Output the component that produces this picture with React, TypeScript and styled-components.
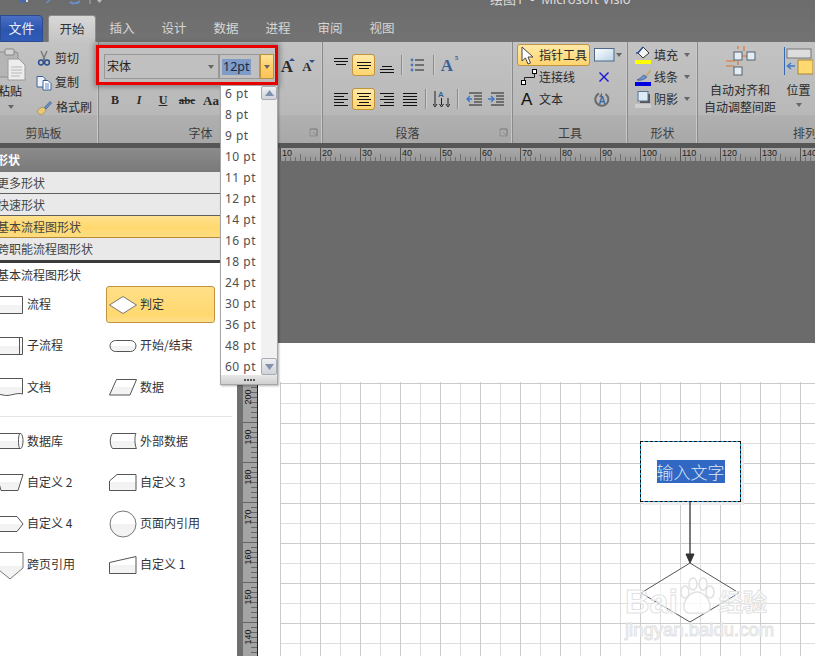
import React, { useId } from 'react';
import styled, { createGlobalStyle } from 'styled-components';

const CJK = '"Noto Sans CJK SC", "Liberation Sans", sans-serif';

const Global = createGlobalStyle`
  html, body { margin: 0; padding: 0; background: #fff; }
  body { font-family: ${CJK}; }
  * { box-sizing: border-box; }
`;

const Screen = styled.div`
  position: relative; width: 815px; height: 656px; overflow: hidden;
  display: flex; flex-direction: column; color: #333; font-size: 12px; background: #fff;
`;
const Lbl = styled.span`display: block; margin-bottom: 2px; white-space: nowrap;`;

/* ---------- title + tabs ---------- */
const TitleBar = styled.header`
  height: 42px; flex: none; background: linear-gradient(#6c6c6c, #737373);
  display: flex; flex-direction: column; justify-content: space-between; overflow: hidden;
`;
const TitleText = styled.div`
  height: 14px; margin-top: -9px; padding-left: 490px; color: #dcdcdc; font-size: 13px;
  line-height: 16px; white-space: pre; font-family: "Noto Sans", ${CJK};
`;
const QuickIcons = styled.svg`
  position: absolute; left: 0; top: 0; display: block;
`;
const TabRow = styled.nav`display: flex; height: 27px; align-items: flex-end;`;
const FileTab = styled.div`
  width: 43px; height: 27px; margin-right: 5px; border-radius: 0 4px 0 0;
  background: linear-gradient(#4a6fc2, #2b56b0 55%, #2f5cb8);
  border: 1px solid #2a4a92; color: #e8eefc; font-size: 13px;
  display: flex; align-items: center; justify-content: center; padding-bottom: 3px;
`;
const Tab = styled.div<{ $active?: boolean }>`
  width: ${p => (p.$active ? 48 : 52)}px; height: 27px; border-radius: 3px 3px 0 0;
  display: flex; align-items: center; justify-content: center; font-size: 12.5px; padding-bottom: 2px;
  color: ${p => (p.$active ? '#333' : '#d6d6d6')};
  background: ${p => (p.$active ? 'linear-gradient(#d8d8d8, #c4c4c4)' : 'none')};
  border: ${p => (p.$active ? '1px solid #8c8c8c' : '0')}; border-bottom: 0;
`;

/* ---------- ribbon ---------- */
const Ribbon = styled.section`
  height: 101px; flex: none; display: flex; overflow: hidden;
  background: linear-gradient(#c3c3c3, #b8b8b8 72%, #b0b0b0 73%, #a8a8a8);
`;
const Group = styled.div<{ $w: number }>`
  width: ${p => p.$w}px; flex: none; display: flex; flex-direction: column; position: relative;
  border-right: 1px solid #8a8a8a; box-shadow: inset -1px 0 #c8c8c8;
  &:last-child { border-right: 0; box-shadow: none; }
`;
const GroupBody = styled.div<{ $pl?: number; $pt?: number }>`
  height: 82px; padding-left: ${p => p.$pl ?? 0}px; padding-top: ${p => p.$pt ?? 0}px; display: flex;
`;
const GroupLabel = styled.div<{ $pr?: number }>`
  height: 19px; display: flex; align-items: center; justify-content: center; color: #3c3c3c; font-size: 12px;
  padding-right: ${p => p.$pr ?? 0}px; padding-bottom: 2px;
`;
const Launcher = styled.svg`position: absolute; right: 3px; bottom: 5px;`;
const Col = styled.div<{ $gap?: number; $pt?: number }>`
  display: flex; flex-direction: column; gap: ${p => p.$gap ?? 0}px; padding-top: ${p => p.$pt ?? 0}px;
`;
const Row = styled.div<{ $ml?: number }>`display: flex; align-items: center; margin-left: ${p => p.$ml ?? 0}px;`;
const Caret = styled.i`
  display: block; width: 0; height: 0; border: 3.5px solid transparent; border-top: 4px solid #666; border-bottom: 0;
`;

const PasteCol = styled.div`width: 36px; flex: none; display: flex; flex-direction: column; align-items: flex-start;`;
const PasteSvg = styled.svg`display: block; margin-top: 6px;`;
const PasteLabel = styled.div`margin: 1px 0 0 -2px; height: 18px; line-height: 18px; color: #222; white-space: nowrap;`;
const PasteCaret = styled(Caret)`margin: 5px 0 0 8px;`;
const ClipRow = styled.div`height: 24.5px; display: flex; align-items: center; gap: 3px; color: #2c2c2c;`;

const Combo = styled.div<{ $w: number }>`
  width: ${p => p.$w}px; height: 25px; background: #c0c0c0; border: 1px solid #989898;
  display: flex; align-items: center; padding: 0 4px 0 2px; justify-content: space-between; color: #222;
`;
const SizeSel = styled.span`
  background: #7f9bc8; color: #1a2a44; font: 12.5px/16px "Noto Sans", sans-serif; padding: 0 1px;
`;
const ComboArrow = styled.div`
  width: 14px; height: 25px; border: 1px solid #c0913d; background: linear-gradient(#ffe39b, #ffcf66 50%, #f9c45a);
  display: flex; align-items: center; justify-content: center; margin-right: 3px;
`;
const FontBtn = styled.div<{ $s?: number; $w?: number; $deco?: string; $italic?: boolean }>`
  width: ${p => p.$w ?? 24}px; height: 24px; display: flex; align-items: center; justify-content: center;
  font: ${p => (p.$italic ? 'italic ' : '')}700 ${p => p.$s ?? 12}px/1 "Liberation Serif", serif; color: #2a2a2a; position: relative;
  text-decoration: ${p => p.$deco ?? 'none'};
`;
const Sup = styled.i`position: absolute; top: 3px; right: 2px; width: 0; height: 0;
  border: 3px solid transparent; border-bottom: 3px solid #30508c; border-top: 0;`;
const Sub = styled.i`position: absolute; top: 5px; right: 2px; width: 0; height: 0;
  border: 3px solid transparent; border-top: 3px solid #30508c; border-bottom: 0;`;

const IconBtn = styled.div<{ $active?: boolean; $w?: number; $ml?: number }>`
  width: ${p => p.$w ?? 23}px; height: 22px; display: flex; align-items: center; justify-content: center;
  border-radius: 3px; border: ${p => (p.$active ? '1px solid #c1923f' : '0')}; margin-left: ${p => p.$ml ?? 0}px;
  background: ${p => (p.$active ? 'linear-gradient(#ffe9a8, #ffd56f)' : 'none')};
`;
const Sep = styled.i<{ $m: number }>`display: block; width: 1px; height: 20px; background: #8a8a8a;
  box-shadow: 1px 0 #cfcfcf; margin: 0 ${p => p.$m}px;`;
const ParaRow = styled.div`display: flex; align-items: center; height: 22px; margin-bottom: 12px;`;
const BlueA = styled.span`font: 700 17px/1 "Liberation Serif", serif; color: #3a6098; position: relative;`;
const Sup5 = styled.span`position: absolute; top: -2px; right: -5px; font-size: 7px; color: #3a6098;`;
const PlainA = styled.span`font: 400 17px/1 "Liberation Sans", sans-serif; color: #111;`;

const ToolGrid = styled.div`
  display: grid; grid-template-columns: 73px 32px; column-gap: 4px; grid-auto-rows: 22px; align-items: center;
`;
const ToolItem = styled.div<{ $active?: boolean }>`
  height: 22px; display: flex; align-items: center; padding-left: 3px; color: #2a2a2a; border-radius: 3px;
  border: 1px solid ${p => (p.$active ? '#c1923f' : 'transparent')};
  background: ${p => (p.$active ? 'linear-gradient(#ffe9a8, #ffd56f)' : 'none')};
`;
const ToolIconBox = styled.span`width: 18px; flex: none; display: flex; align-items: center;`;
const Side = styled.div`display: flex; align-items: center; gap: 1px; height: 22px;`;
const SideCenter = styled.div<{ $ml?: number }>`
  display: flex; align-items: center; justify-content: center; width: 16px; margin-left: ${p => p.$ml ?? 0}px; height: 22px;
`;
const ShapeRow = styled.div`display: flex; align-items: center; height: 22px; gap: 2px; color: #2a2a2a;`;
const ShapeCaret = styled(Caret)`margin-left: 4px;`;
const BigBtn = styled.div<{ $w: number }>`
  width: ${p => p.$w}px; flex: none; display: flex; flex-direction: column; align-items: center; color: #2a2a2a;
  line-height: 17px; white-space: nowrap;
`;
const BigIcon = styled.svg`display: block; margin-top: 4px; margin-bottom: 4px;`;
const ArrangeLabel = styled(GroupLabel)`justify-content: flex-end; margin-right: -2px;`;
const BigCaret = styled(Caret)`margin-top: 5px;`;

/* ---------- main area ---------- */
const Main = styled.main`
  flex: 1; min-height: 0; display: flex; border-top: 5px solid #565656; background: #6b6b6b;
`;
const Panel = styled.aside`width: 237px; flex: none; display: flex; flex-direction: column; background: #fff; overflow: hidden;`;
const PanelHead = styled.div`
  height: 24px; flex: none; background: linear-gradient(#8c8c8c, #797979); color: #fff; font-weight: 700;
  line-height: 23px; text-indent: -4px; white-space: nowrap;
`;
const Accordion = styled.div`border-bottom: 3px solid #3b3b3b; flex: none;`;
const AccRow = styled.div<{ $active?: boolean }>`
  height: 22px; line-height: 21px; text-indent: -3px; white-space: nowrap; color: #444;
  border-bottom: 1px solid ${p => (p.$active ? '#b98a35' : '#5f5f5f')};
  background: ${p => (p.$active ? 'linear-gradient(#ffe28f, #ffd86f 50%, #ffdc7e)' : '#e9e9e9')};
  &:last-child { border-bottom: 0; }
`;
const StencilTitle = styled.div`height: 23px; line-height: 23px; text-indent: -3px; color: #333; flex: none; white-space: nowrap;`;
const StencilGrid = styled.div`
  display: grid; grid-template-columns: 113px 109px; grid-auto-rows: 37px; row-gap: 4.3px; margin-left: -7px;
`;
const Stencil = styled.div<{ $active?: boolean }>`
  display: flex; align-items: center; gap: 3px; padding-left: 2px; color: #333; border-radius: 3px; white-space: nowrap;
  border: 1px solid ${p => (p.$active ? '#c1923f' : 'transparent')};
  background: ${p => (p.$active ? 'linear-gradient(#ffdf88, #ffd86f 80%, #ffe08c)' : 'none')};
`;
const Divider = styled.hr`border: 0; height: 1px; background: #e4e4e4; margin: 10px 5px 6px 0;`;

const Work = styled.div`flex: 1; min-width: 0; display: flex; flex-direction: column;`;
const HRuler = styled.div`height: 13px; flex: none; margin-left: 43px; overflow: hidden; background: linear-gradient(#a8a8a8, #999);`;
const Backdrop = styled.div`height: 182px; flex: none; background: #6b6b6b;`;
const Lower = styled.div`flex: 1; min-height: 0; display: grid; grid-template-columns: 21px 1fr; background: #fff;`;
const VRulerCol = styled.div`padding-top: 40px;`;
const VRuler = styled.div`
  height: 273px; border-left: 6px solid #6f6f6f; border-right: 1px solid #222; background: #a4a4a4; overflow: hidden;
`;
const Paper = styled.div`padding: 39px 0 0 22px; min-width: 0;`;
const Sheet = styled.div`
  position: relative; height: 274px; background-color: #fff;
  background-image:
    linear-gradient(to right, #cbcbcb 1px, transparent 1px),
    linear-gradient(to bottom, #cbcbcb 1px, transparent 1px),
    linear-gradient(to right, #dedede 1px, transparent 1px),
    linear-gradient(to bottom, #dedede 1px, transparent 1px);
  background-size: 40px 40px, 40px 40px, 20px 20px, 20px 20px;
  background-position: 0 0, 0 1px, 0 0, 0 1px;
`;
const TextBox = styled.div`
  position: absolute; left: 360px; top: 59px; width: 101px; height: 61px; background: #fff;
  border: 1px solid #18a4e8; box-shadow: 3px 3px 0 #ececec;
  display: flex; align-items: center; justify-content: center;
  &::after { content: ''; position: absolute; inset: -1px; border: 1px dashed #111; }
`;
const Selected = styled.span`
  background: #3068c4; color: #dfe7f5; font-size: 17px; line-height: 23px; width: 68px; display: block;
  white-space: nowrap; font-weight: 300; text-align: center;
`;
const Flow = styled.svg`position: absolute; left: 360px; top: 118px;`;
const Watermark = styled.div`
  position: absolute; left: 345px; top: 201px; width: 150px; pointer-events: none; color: rgba(255,255,255,.6);
  -webkit-text-stroke: 1px #e2e2e2; white-space: nowrap;
`;
const WmTop = styled.div`display: flex; align-items: center; font: 700 34px/36px "Liberation Sans", sans-serif; height: 36px;`;
const WmCjk = styled.span`font: 700 24px/36px ${CJK}; margin-left: 3px;`;
const WmBottom = styled.div`font: 400 18.5px/18px "Liberation Sans", sans-serif; margin-top: 2px;`;
const Paw = styled.svg`display: block; margin: -8px 0 0 0;`;

/* ---------- overlays ---------- */
const RedFrame = styled.div`
  position: absolute; left: 96px; top: 45px; width: 182px; height: 40px; border: 3px solid #e80000;
  box-shadow: 0 0 5px 2px rgba(60,60,60,.45); pointer-events: none;
`;
const Dropdown = styled.div`
  position: absolute; left: 220px; top: 85px; width: 58px; height: 300px; background: #fff;
  border: 1px solid #a6a6a6; box-shadow: 1px 1px 2px rgba(0,0,0,.3); display: flex; flex-direction: column; overflow: hidden;
`;
const DdBody = styled.div`flex: 1; display: flex; min-height: 0;`;
const DdList = styled.div`flex: 1; margin-top: -3px; padding-left: 4px; overflow: hidden;`;
const DdItem = styled.div`
  height: 21px; font: 12px/21px "Noto Sans", sans-serif; color: #4f4f4f; letter-spacing: .5px; white-space: nowrap;
`;
const DdBar = styled.div`width: 16px; flex: none; background: #f1f1f1; display: flex; flex-direction: column; justify-content: space-between;`;
const DdArrow = styled.div<{ $h: number }>`
  height: ${p => p.$h}px; background: linear-gradient(#eef0f3, #cfd2d8); border: 1px solid #a8acb4; border-radius: 2px;
  display: flex; align-items: center; justify-content: center;
`;
const Grip = styled.div`
  height: 9px; flex: none; background: linear-gradient(#e8e8e8, #cfcfcf); display: flex; align-items: center; justify-content: center; gap: 1px;
  & > i { width: 2px; height: 2px; background: #555; display: block; }
`;
const ShapeSvg = styled.svg`flex: none; display: block; overflow: visible;`;
const RulerSvg = styled.svg`display: block;`;

/* ---------- icons ---------- */
const Lines = ({ kind }: { kind: 'left' | 'center' | 'right' | 'just' | 'top' | 'mid' | 'bot' }) => {
  const rows: [number, number, number][] = {
    left: [[1, 15, 3], [1, 11, 6], [1, 15, 9], [1, 11, 12], [1, 15, 15]],
    center: [[1, 15, 3], [3, 13, 6], [1, 15, 9], [3, 13, 12], [1, 15, 15]],
    right: [[1, 15, 3], [5, 15, 6], [1, 15, 9], [5, 15, 12], [1, 15, 15]],
    just: [[1, 15, 3], [1, 15, 6], [1, 15, 9], [1, 15, 12], [1, 15, 15]],
    top: [[1, 15, 2], [1, 15, 5], [3, 13, 8]],
    mid: [[1, 15, 6], [1, 15, 9], [3, 13, 12]],
    bot: [[3, 13, 10], [1, 15, 13], [1, 15, 16]],
  }[kind] as [number, number, number][];
  return (
    <svg width="16" height="18" viewBox="0 0 16 18">
      {rows.map(([a, b, y], i) => <line key={i} x1={a} x2={b} y1={y + .5} y2={y + .5} stroke="#111" />)}
    </svg>
  );
};
const Launch = () => (
  <Launcher width="10" height="10" viewBox="0 0 10 10">
    <path d="M1 1H8V8" fill="none" stroke="#777" /><path d="M1 1V8H8M4 4L8 8" fill="none" stroke="#8d8d8d" />
  </Launcher>
);
const Paste = () => (
  <PasteSvg width="26" height="33" viewBox="0 0 26 33">
    <rect x="-3" y="4" width="21" height="25" rx="2" fill="#b5b5b5" stroke="#8f8f8f" />
    <rect x="5" y="1" width="9" height="6" rx="1" fill="#d4d4d4" stroke="#858585" />
    <path d="M8 11H19L25 17V32H8Z" fill="#ededed" stroke="#9a9a9a" />
    <path d="M11 19H22M11 22H22M11 25H22M11 28H20" stroke="#b8b8b8" />
  </PasteSvg>
);
const Scissors = () => (
  <svg width="16" height="16" viewBox="0 0 16 16">
    <path d="M5 1L9 10M11 1L7 10" stroke="#777" strokeWidth="1.4" />
    <circle cx="5" cy="12.5" r="2.4" fill="none" stroke="#2d4f8e" strokeWidth="1.5" />
    <circle cx="11" cy="12.5" r="2.4" fill="none" stroke="#2d4f8e" strokeWidth="1.5" />
  </svg>
);
const CopyIcon = () => (
  <svg width="16" height="16" viewBox="0 0 16 16">
    <path d="M1 1.5H7L9 3.5V12H1Z" fill="#eef2f8" stroke="#3a6098" />
    <path d="M7 5.5H12L15 8.5V15H7Z" fill="#fff" stroke="#3a6098" />
    <path d="M9 9H13M9 11H13M9 13H13" stroke="#5c86c2" />
  </svg>
);
const Brush = () => (
  <svg width="17" height="17" viewBox="0 0 17 17">
    <path d="M1 12C4 9 6 8 8 8L10 11C9 13 7 15 5 16C3 15 2 14 1 12Z" fill="#e9c978" stroke="#9c8545" strokeWidth=".7" />
    <path d="M8.5 8.5L14 2.5L15.5 4L10 10Z" fill="#6f8fc4" stroke="#3a5a90" strokeWidth=".7" />
  </svg>
);
const Pointer = () => (
  <svg width="13" height="19" viewBox="0 0 13 19"><path d="M1 1V15L4.5 12L7 18L9.5 17L7 11H12Z" fill="#fff" stroke="#444" /></svg>
);
const Connector = () => (
  <svg width="17" height="17" viewBox="0 0 17 17">
    <path d="M3.5 12.5V8.5H13.5V4" fill="none" stroke="#222" />
    <rect x=".5" y="11.5" width="4" height="4" fill="#fff" stroke="#000" /><rect x="11.5" y=".5" width="4" height="4" fill="#fff" stroke="#000" />
  </svg>
);
const RectIcon = () => (
  <svg width="21" height="14" viewBox="0 0 21 14">
    <defs><linearGradient id="rectg" x1="0" y1="0" x2="1" y2="1"><stop stopColor="#fff" /><stop offset="1" stopColor="#b9d3e6" /></linearGradient></defs>
    <rect x=".5" y=".5" width="19.5" height="12.5" fill="url(#rectg)" stroke="#4d6a8a" />
  </svg>
);
const XIcon = () => (
  <svg width="12" height="12" viewBox="0 0 12 12"><path d="M1.5 1.5L10.5 10.5M10.5 1.5L1.5 10.5" stroke="#1414d8" strokeWidth="1.4" /></svg>
);
const RotateA = () => (
  <svg width="16" height="17" viewBox="0 0 16 17">
    <path d="M5 2.5A6.5 6.5 0 1 0 11.5 3" fill="none" stroke="#6a6a6a" strokeWidth="2" />
    <path d="M5 6L8 1.5L8 6Z" fill="#6a6a6a" />
    <text x="4.5" y="13" fontSize="10" fontWeight="700" fill="#3a6aa8" fontFamily="Liberation Sans">A</text>
  </svg>
);
const FillIcon = () => (
  <svg width="17" height="18" viewBox="0 0 17 18">
    <path d="M8 1L14 7L8 12L3 7Z" fill="#f2f4f8" stroke="#333" />
    <path d="M8 1L3 7H1" fill="none" stroke="#2b4d88" strokeWidth="1.4" />
    <rect x="0" y="14" width="16" height="4" fill="#ffff00" />
  </svg>
);
const LineIcon = () => (
  <svg width="17" height="18" viewBox="0 0 17 18">
    <path d="M2 12C5 11 7 8 9 7L12 9C10 11 6 13 2 12Z" fill="#6f93cc" stroke="#38588e" strokeWidth=".7" />
    <path d="M11 7L15 1.5L16 2.5L12.5 8Z" fill="#c9a95a" />
    <rect x="0" y="14" width="16" height="4" fill="#0000e0" />
  </svg>
);
const ShadowIcon = () => (
  <svg width="17" height="18" viewBox="0 0 17 18">
    <rect x="5" y="4" width="10" height="9" fill="#555" />
    <rect x="3" y="1.5" width="10" height="9.5" fill="#dcebf4" stroke="#5a7590" />
    <rect x="0" y="14" width="16" height="4" fill="#cfcfcf" />
  </svg>
);
const ListIcon = () => (
  <svg width="14" height="14" viewBox="0 0 14 14">
    {[2, 7, 12].map(y => <g key={y}><circle cx="2" cy={y} r="1.4" fill="#4a76b8" /><line x1="5" x2="14" y1={y} y2={y} stroke="#222" /></g>)}
  </svg>
);
const ColumnsA = () => (
  <svg width="17" height="18" viewBox="0 0 17 18">
    <path d="M2 1V15M8.5 8V15M15 8V15" stroke="#222" /><path d="M0 14L2 17L4 14M6.5 14L8.5 17L10.5 14M13 14L15 17L17 14" fill="none" stroke="#222" />
    <text x="5" y="7" fontSize="8" fontWeight="700" fill="#3a6098" fontFamily="Liberation Sans">A</text>
  </svg>
);
const Indent = ({ right }: { right?: boolean }) => (
  <svg width="17" height="14" viewBox="0 0 17 14">
    {[1, 4, 7, 10, 13].map((y, i) => <line key={y} x1={i % 4 === 0 ? 3 : 8} x2="16" y1={y} y2={y} stroke="#222" />)}
    <path d={right ? 'M0 7H5M3 4L6 7L3 10' : 'M6 7H1M4 4L1 7L4 10'} fill="none" stroke="#3f74c4" strokeWidth="1.3" />
  </svg>
);
const AutoAlign = () => (
  <BigIcon width="32" height="31" viewBox="0 0 32 31">
    <path d="M20 0V5M14 0V3M2 15H11M2 20H10M14 15V19M17 10H24" stroke="#e2702a" strokeWidth="1.2" />
    <rect x="10" y="6" width="8" height="8" fill="#e4edf5" stroke="#56606c" />
    <rect x="23" y="6" width="8" height="8" fill="#e4edf5" stroke="#56606c" />
    <rect x="10" y="21" width="8" height="8" fill="#e4edf5" stroke="#56606c" />
  </BigIcon>
);
const PositionIcon = () => (
  <BigIcon width="29" height="31" viewBox="0 0 29 31">
    <line x1=".5" x2=".5" y1="1" y2="29" stroke="#3569b4" />
    <rect x="3" y="3" width="24" height="9" fill="#ddd" stroke="#777" />
    <rect x="14" y="14" width="15" height="14" fill="#ffd86f" stroke="#a5853a" />
    <path d="M11 20H4M7 17L3.5 20L7 23" fill="none" stroke="#3d78cc" strokeWidth="1.5" />
  </BigIcon>
);

const ShapeIcon = ({ d, stroke = '#555', fill }: { d: string; stroke?: string; fill?: string }) => {
  const id = useId();
  return (
    <ShapeSvg width="28" height="28" viewBox="0 0 28 28">
      <defs>
        <linearGradient id={id} x1="0" y1="0" x2="0" y2="1">
          <stop offset="0" stopColor="#fff" /><stop offset=".5" stopColor="#fff" />
          <stop offset=".5" stopColor="#f2f2f2" /><stop offset="1" stopColor="#f4f4f4" />
        </linearGradient>
      </defs>
      <path d={d} fill={fill ?? `url(#${id})`} stroke={stroke} strokeWidth="1" />
    </ShapeSvg>
  );
};
const S = {
  process: 'M.5 5.5H26.5V22.5H.5Z',
  decision: 'M.5 14L14 5.5L27.5 14L14 22.5Z',
  sub: 'M.5 5.5H26.5V22.5H.5ZM23.5 5.5V22.5',
  term: 'M6.5 8.5H21.5A5.5 5.5 0 0 1 21.5 19.5H6.5A5.5 5.5 0 0 1 6.5 8.5Z',
  doc: 'M.5 5.5H26.5V21C20 19 14 24 7 22C4 21.5 2 21 .5 21Z',
  data: 'M7.5 6.5H27.5L21 22H.5Z',
  db: 'M.5 6.5H24.5C26 6.5 27 10 27 14S26 21.5 24.5 21.5H.5ZM24.5 6.5C23 6.5 22.5 10 22.5 14S23 21.5 24.5 21.5',
  ext: 'M3.5 6.5H27C25.5 9 25.5 18 27.5 21.5H3.5C.5 18 .5 10 3.5 6.5Z',
  c2: 'M.5 6.5H27L22 22.5H5Z',
  c3: 'M8 6.5H27V22.5H.5V13Z',
  c4: 'M.5 6.5H21L27 14L21 21.5H.5L-6 14Z',
  circle: 'M14 1A13 13 0 1 1 14 27A13 13 0 1 1 14 1Z',
  off: 'M.5 1.5H27V17L14 28L.5 17Z',
  c1: 'M.5 11.5L27 5.5V22.5H.5Z',
};

const SizeList = ['6 pt', '8 pt', '9 pt', '10 pt', '11 pt', '12 pt', '14 pt', '16 pt', '18 pt', '24 pt', '30 pt', '36 pt', '48 pt', '60 pt'];

const HTicks = () => {
  const items: React.ReactNode[] = [];
  for (let x = 0; x <= 535; x += 5) {
    const major = x % 40 === 0;
    const mid = x % 20 === 0;
    items.push(<line key={x} x1={x + .5} x2={x + .5} y1={major ? 0 : mid ? 6 : 9} y2={13} stroke={major ? '#555' : '#6f6f6f'} strokeWidth={1} />);
    if (major) items.push(
      <text key={`t${x}`} x={x + 2} y={8} fontSize="9" fill="#222" fontFamily="Liberation Sans">{10 + (x / 40) * 10}</text>
    );
  }
  return <RulerSvg width="535" height="13">{items}</RulerSvg>;
};
const VTicks = () => {
  const items: React.ReactNode[] = [];
  for (let y = -1; y <= 273; y += 5) {
    const major = (y + 1) % 40 === 0;
    items.push(<line key={y} x1={major ? 0 : 8} x2={14} y1={y + .5} y2={y + .5} stroke="#666" />);
  }
  const labels = [[200, 9], [190, 49], [180, 89], [170, 129], [160, 169], [150, 209], [140, 249]];
  labels.forEach(([n, y]) => items.push(
    <text key={`l${n}`} transform={`translate(8 ${y + 5}) rotate(-90)`} fontSize="9" fill="#111" fontFamily="Liberation Sans" textAnchor="middle">{n}</text>
  ));
  return <RulerSvg width="14" height="273">{items}</RulerSvg>;
};

const St = ({ d, label, active, stroke, fill }: { d: string; label: string; active?: boolean; stroke?: string; fill?: string }) => (
  <Stencil $active={active}><ShapeIcon d={d} stroke={stroke} fill={fill} /><Lbl>{label}</Lbl></Stencil>
);

export default function App() {
  return (
    <Screen>
      <Global />
      <QuickIcons width="300" height="5" viewBox="0 0 300 5">
        <rect x="20" y="0" width="6" height="3" fill="#4a6aa0" /><rect x="26" y="0" width="2" height="2" fill="#dde" />
        <path d="M46 3L50 0" stroke="#6d8fc8" strokeWidth="1.5" /><path d="M70 2C72 4 77 4 80 1" stroke="#6d8fc8" strokeWidth="2" fill="none" />
        <line x1="90" x2="90" y1="0" y2="4" stroke="#aaa" /><path d="M97 0H102L99.5 3Z" fill="#bbb" />
      </QuickIcons>
      <TitleBar>
        <TitleText>绘图1  -  Microsoft Visio</TitleText>
        <TabRow>
          <FileTab>文件</FileTab>
          <Tab $active>开始</Tab>
          {['插入', '设计', '数据', '进程', '审阅', '视图'].map(t => <Tab key={t}>{t}</Tab>)}
        </TabRow>
      </TitleBar>

      <Ribbon>
        <Group $w={99}>
          <GroupBody>
            <PasteCol><Paste /><PasteLabel>粘贴</PasteLabel><PasteCaret /></PasteCol>
            <Col $pt={4}>
              <ClipRow><Scissors /><Lbl>剪切</Lbl></ClipRow>
              <ClipRow><CopyIcon /><Lbl>复制</Lbl></ClipRow>
              <ClipRow><Brush /><Lbl>格式刷</Lbl></ClipRow>
            </Col>
          </GroupBody>
          <GroupLabel $pr={11}>剪贴板</GroupLabel>
        </Group>

        <Group $w={224}>
          <GroupBody $pl={5} $pt={12}>
            <Col $gap={9}>
              <Row>
                <Combo $w={115}><Lbl>宋体</Lbl><Caret /></Combo>
                <Combo $w={41}><SizeSel>12pt</SizeSel></Combo>
                <ComboArrow><Caret /></ComboArrow>
                <FontBtn $s={17} $w={20}>A<Sup /></FontBtn>
                <FontBtn $s={13} $w={20}>A<Sub /></FontBtn>
              </Row>
              <Row $ml={-1}>
                <FontBtn>B</FontBtn>
                <FontBtn $italic>I</FontBtn>
                <FontBtn $deco="underline">U</FontBtn>
                <FontBtn $s={11} $deco="line-through">abc</FontBtn>
                <FontBtn $s={13}>Aa</FontBtn>
              </Row>
            </Col>
          </GroupBody>
          <GroupLabel $pr={20}>字体</GroupLabel>
          <Launch />
        </Group>

        <Group $w={190}>
          <GroupBody $pl={6} $pt={12}>
            <Col>
              <ParaRow>
                <IconBtn><Lines kind="top" /></IconBtn>
                <IconBtn $active><Lines kind="mid" /></IconBtn>
                <IconBtn><Lines kind="bot" /></IconBtn>
                <Sep $m={3} />
                <IconBtn $w={22} $ml={1}><ListIcon /></IconBtn>
                <Sep $m={5} />
                <IconBtn $w={22} $ml={-3}><BlueA>A<Sup5>5</Sup5></BlueA></IconBtn>
              </ParaRow>
              <ParaRow>
                <IconBtn><Lines kind="left" /></IconBtn>
                <IconBtn $active><Lines kind="center" /></IconBtn>
                <IconBtn><Lines kind="right" /></IconBtn>
                <IconBtn><Lines kind="just" /></IconBtn>
                <Sep $m={4} />
                <IconBtn $w={22}><ColumnsA /></IconBtn>
                <Sep $m={5} />
                <IconBtn $w={22}><Indent /></IconBtn>
                <IconBtn $w={22}><Indent right /></IconBtn>
              </ParaRow>
            </Col>
          </GroupBody>
          <GroupLabel $pr={20}>段落</GroupLabel>
          <Launch />
        </Group>

        <Group $w={115}>
          <GroupBody $pl={4} $pt={2}>
            <ToolGrid>
              <ToolItem $active><ToolIconBox><Pointer /></ToolIconBox><Lbl>指针工具</Lbl></ToolItem>
              <Side><RectIcon /><Caret /></Side>
              <ToolItem><ToolIconBox><Connector /></ToolIconBox><Lbl>连接线</Lbl></ToolItem>
              <SideCenter $ml={2}><XIcon /></SideCenter>
              <ToolItem><ToolIconBox><PlainA>A</PlainA></ToolIconBox><Lbl>文本</Lbl></ToolItem>
              <SideCenter><RotateA /></SideCenter>
            </ToolGrid>
          </GroupBody>
          <GroupLabel>工具</GroupLabel>
        </Group>

        <Group $w={70}>
          <GroupBody $pl={7} $pt={2}>
            <Col>
              <ShapeRow><FillIcon /><Lbl>填充</Lbl><ShapeCaret /></ShapeRow>
              <ShapeRow><LineIcon /><Lbl>线条</Lbl><ShapeCaret /></ShapeRow>
              <ShapeRow><ShadowIcon /><Lbl>阴影</Lbl><ShapeCaret /></ShapeRow>
            </Col>
          </GroupBody>
          <GroupLabel>形状</GroupLabel>
        </Group>

        <Group $w={117}>
          <GroupBody>
            <BigBtn $w={84}><AutoAlign /><span>自动对齐和</span><span>自动调整间距</span></BigBtn>
            <BigBtn $w={33}><PositionIcon /><span>位置</span><BigCaret /></BigBtn>
          </GroupBody>
          <ArrangeLabel>排列</ArrangeLabel>
        </Group>
      </Ribbon>

      <Main>
        <Panel>
          <PanelHead>形状</PanelHead>
          <Accordion>
            <AccRow>更多形状</AccRow>
            <AccRow>快速形状</AccRow>
            <AccRow $active>基本流程图形状</AccRow>
            <AccRow>跨职能流程图形状</AccRow>
          </Accordion>
          <StencilTitle>基本流程图形状</StencilTitle>
          <StencilGrid>
            <St d={S.process} label="流程" />
            <St d={S.decision} label="判定" active fill="#fff" stroke="#777" />
            <St d={S.sub} label="子流程" />
            <St d={S.term} label="开始/结束" />
            <St d={S.doc} label="文档" />
            <St d={S.data} label="数据" />
          </StencilGrid>
          <Divider />
          <StencilGrid>
            <St d={S.db} label="数据库" />
            <St d={S.ext} label="外部数据" />
            <St d={S.c2} label="自定义 2" />
            <St d={S.c3} label="自定义 3" />
            <St d={S.c4} label="自定义 4" />
            <St d={S.circle} label="页面内引用" stroke="#777" />
            <St d={S.off} label="跨页引用" stroke="#777" />
            <St d={S.c1} label="自定义 1" />
          </StencilGrid>
        </Panel>
        <Work>
          <HRuler><HTicks /></HRuler>
          <Backdrop />
          <Lower>
            <VRulerCol><VRuler><VTicks /></VRuler></VRulerCol>
            <Paper>
              <Sheet>
                <TextBox><Selected>输入文字</Selected></TextBox>
                <Flow width="100" height="126" viewBox="0 0 100 126">
                  <path d="M50 2V55" stroke="#333" strokeWidth="1.3" />
                  <path d="M46 54H54L50 63Z" fill="#333" stroke="#333" />
                  <path d="M50 63L99 93L50 122L1 93Z" fill="#fff" fillOpacity=".55" stroke="#555" />
                </Flow>
                <Watermark>
                  <WmTop>
                    Bai
                    <Paw width="38" height="40" viewBox="0 0 34 40">
                      <g fill="rgba(255,255,255,.5)" stroke="#e0e0e0" strokeWidth="1.4">
                        <ellipse cx="5" cy="15" rx="4" ry="6" /><ellipse cx="13" cy="7" rx="4" ry="6" />
                        <ellipse cx="23" cy="7" rx="4" ry="6" /><ellipse cx="30" cy="15" rx="4" ry="6" />
                        <path d="M17 15C24 15 31 24 30 31C29 38 22 36 17 36C12 36 5 38 4 31C3 24 10 15 17 15Z" />
                      </g>
                    </Paw>
                    <WmCjk>经验</WmCjk>
                  </WmTop>
                  <WmBottom>jingyan.baidu.com</WmBottom>
                </Watermark>
              </Sheet>
            </Paper>
          </Lower>
        </Work>
      </Main>

      <RedFrame />
      <Dropdown>
        <DdBody>
          <DdList>{SizeList.map(s => <DdItem key={s}>{s}</DdItem>)}</DdList>
          <DdBar>
            <DdArrow $h={14}><svg width="9" height="6"><path d="M0 6L4.5 0L9 6Z" fill="#7f92aa" /></svg></DdArrow>
            <DdArrow $h={17}><svg width="9" height="6"><path d="M0 0L4.5 6L9 0Z" fill="#7f92aa" /></svg></DdArrow>
          </DdBar>
        </DdBody>
        <Grip><i /><i /><i /><i /></Grip>
      </Dropdown>
    </Screen>
  );
}
